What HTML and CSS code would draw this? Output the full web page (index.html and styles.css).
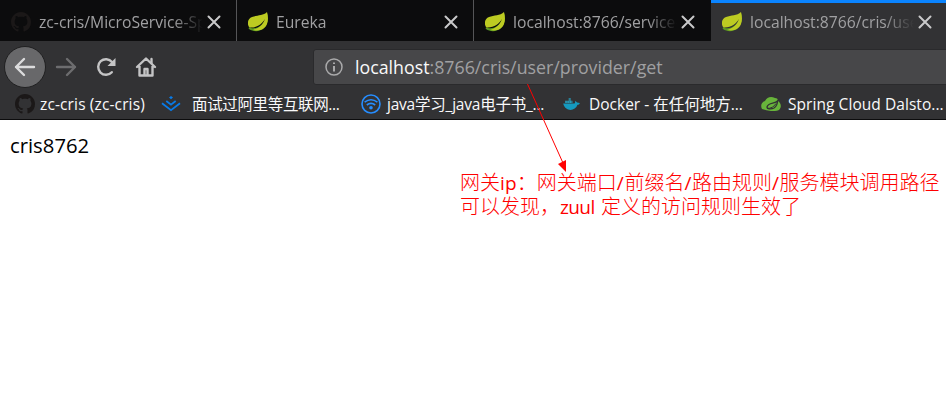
FILE: index.html
```html
<!DOCTYPE html>
<html lang="zh">
<head>
<meta charset="utf-8">
<title>cris8762</title>
<link rel="stylesheet" href="styles.css">
</head>
<body>
<svg class="defs" width="0" height="0">
  <symbol id="cat" viewBox="0 0 16 16"><path fill-rule="evenodd" d="M8 0C3.58 0 0 3.58 0 8c0 3.54 2.29 6.53 5.47 7.59.4.07.55-.17.55-.38 0-.19-.01-.82-.01-1.49-2.01.37-2.53-.49-2.69-.94-.09-.23-.48-.94-.82-1.13-.28-.15-.68-.52-.01-.53.63-.01 1.08.58 1.23.82.72 1.21 1.87.87 2.33.66.07-.52.28-.87.51-1.07-1.78-.2-3.64-.89-3.64-3.95 0-.87.31-1.59.82-2.15-.08-.2-.36-1.02.08-2.12 0 0 .67-.21 2.2.82.64-.18 1.32-.27 2-.27s1.36.09 2 .27c1.53-1.04 2.2-.82 2.2-.82.44 1.1.16 1.92.08 2.12.51.56.82 1.27.82 2.15 0 3.07-1.87 3.75-3.65 3.95.29.25.54.73.54 1.48 0 1.07-.01 1.93-.01 2.2 0 .21.15.46.55.38A8.01 8.01 0 0 0 16 8c0-4.42-3.58-8-8-8z"/></symbol>
  <symbol id="leaf" viewBox="0 0 20 20"><path fill="#5c9a22" d="M19 1C21 8 19 13 16 16C12 20 5 20 1 17C0 16 1 15 3 16C9 17 14 14 17 8Z"/><path fill="#bdcb22" d="M19 0C15 4 9 3 4 5C-1 7-1 13 1.500 15.500C9 16 14 12 17 7C15 13 11 16 5 18C12 19.500 17 17 19 12C20.500 8 20 4 19 0Z"/></symbol>
  <symbol id="x" viewBox="0 0 14 14"><path d="M1.500 1.500l11 11M12.500 1.500l-11 11" fill="none" stroke="#c9c9ca" stroke-width="2" stroke-linecap="round"/></symbol>
</svg>
<header>
  <div class="tabs">
    <div class="tab"><svg class="fav cat"><use href="#cat"/></svg><span class="title">zc-cris/MicroService-Sp</span><svg class="close"><use href="#x"/></svg></div>
    <div class="tab"><svg class="fav"><use href="#leaf"/></svg><span class="title">Eureka</span><svg class="close"><use href="#x"/></svg></div>
    <div class="tab"><svg class="fav"><use href="#leaf"/></svg><span class="title">localhost:8766/service-</span><svg class="close"><use href="#x"/></svg></div>
    <div class="tab active"><svg class="fav"><use href="#leaf"/></svg><span class="title">localhost:8766/cris/use</span><svg class="close"><use href="#x"/></svg></div>
  </div>
  <div class="nav">
    <div class="back"><svg viewBox="0 0 22 20"><path d="M20 10H2M10 2L2 10l8 8"/></svg></div>
    <svg class="forward" viewBox="0 0 22 20"><path d="M2 10h18M12 2l8 8-8 8"/></svg>
    <svg class="reload" viewBox="0 0 20 20"><path d="M15.800 15.200A7.800 7.800 0 1 1 16 5"/><path class="solid" d="M19.500 1v8h-8z"/></svg>
    <svg class="home" viewBox="0 0 22 22"><path d="M2 11L11 2.500 20 11M4.500 10v9.500h13V10M9.500 19v-6h3v6"/><path d="M16.500 3v4"/></svg>
    <div class="url"><svg class="info" viewBox="0 0 18 18"><circle cx="9" cy="9" r="8"/><path class="letter" d="M9 8v5.500M9 4.500v1.500"/></svg><span class="address"><b>localhost</b>:8766/cris/user/provider/get</span></div>
  </div>
  <div class="marks">
    <span class="mark m1"><svg class="cat"><use href="#cat"/></svg><span>zc-cris (zc-cris)</span></span>
    <span class="mark m2"><svg viewBox="0 0 20 16"><path d="M1 7.200l9 7 9-7M5.300 5l4.700 3.700L14.700 5" fill="none" stroke="#087be8" stroke-width="1.800"/><path d="M10 0l2 1.600-2 1.600-2-1.600z" fill="#087be8"/></svg><span>面试过阿里等互联网...</span></span>
    <span class="mark m3"><svg viewBox="0 0 20 20"><g fill="none" stroke="#268dff" stroke-width="1.600"><circle cx="10" cy="10" r="9"/><path d="M3.600 8.200q6.400-5 12.800 0M5.800 11q4.200-3.300 8.400 0"/></g><circle cx="10" cy="13.800" r="1.800" fill="#268dff"/></svg><span>java学习_java电子书_...</span></span>
    <span class="mark m4"><svg viewBox="0 0 18 13"><path d="M0 6h12c1 0 1-2 1-3l2 2 3 .3c-.4 1.700-1.500 2-2.500 2C13 15 2 15 0 6Z" fill="#159abf"/><path d="M2 3h8v2.500H2zM6 0h2v3H6z" fill="#2b9fbd"/><path d="M3 3v2.500M5 3v2.500M7 0v5.500M9 3v2.500" stroke="#23545f" stroke-width=".5"/></svg><span>Docker - 在任何地方...</span></span>
    <span class="mark m5"><svg viewBox="0 0 20 14"><path d="M1 12C-1 8 1 5 4 4C6 0 10-1 14 1c2 0 3 1 3 3 3 2 4 6 1 9-5 2-11 1-17-1Z" fill="#68b43b"/><path d="M16.500 4C14 7 7 5 6 10c0 2 4 2.500 7 1 3-2 3.500-4 3.500-7Z" stroke="#323234" stroke-width="1.300" fill="#68b43b"/><path d="M6 11.500q6 0 9-5" stroke="#323234" fill="none"/></svg><span>Spring Cloud Dalsto...</span></span>
  </div>
</header>
<main>
  <div class="body-text">cris8762</div>
  <div class="note"><div>网关<i class="ip">ip</i>：网关端口<i>/</i>前缀名<i>/</i>路由规则<i>/</i>服务模块调用路径</div><div>可以发现，<i class="zuul">zuul</i> 定义的访问规则生效了</div></div>
</main>
<svg class="arrow" viewBox="0 0 44 90"><path d="M0.500 1L36 80" stroke="#f00" fill="none"/><path d="M39 89L31 81l8-4z" fill="#f00"/></svg>
</body>
</html>
```
FILE: styles.css
```css
* { box-sizing: border-box; }
body { margin: 0; width: 946px; height: 405px; overflow: hidden; background: #fff; font-family: "Open Sans", "Noto Sans CJK SC", sans-serif; }
svg { display: block; flex: none; }
.defs { position: absolute; }
header { height: 120px; background: #323234; border-bottom: 1px solid #0c0c0d; }
.tabs { display: flex; height: 41px; }
.tab { width: 237px; flex: none; display: flex; align-items: center; height: 41px; padding: 2px 15px 0 11px; background: #0c0c0d; border-right: 1px solid #555557; }
.tab:nth-child(3) { border-right-color: #0c0c0d; }
.tab.active { width: 235px; background: #323234; border-top: 3px solid #0a84ff; border-right: 0; padding: 0 14px 1px 11px; }
.fav { width: 20px; height: 20px; }
.cat { fill: #1b1818; }
.title { flex: 1; min-width: 0; margin-left: 8px; overflow: hidden; white-space: nowrap; font-size: 15.700px; line-height: 24px; color: #a0a0a2; -webkit-mask-image: linear-gradient(90deg, #000 calc(100% - 30px), transparent); mask-image: linear-gradient(90deg, #000 calc(100% - 30px), transparent); }
.close { width: 14px; height: 14px; margin-left: 4px; }
.nav { height: 47px; display: flex; align-items: center; padding: 4px 0 0 4px; }
.nav svg { fill: none; stroke: #c4c4c5; stroke-width: 2.400; stroke-linecap: round; stroke-linejoin: round; }
.back { width: 42px; height: 42px; flex: none; border-radius: 50%; background: #68686a; border: 1px solid #202021; display: flex; align-items: center; justify-content: center; }
.nav .back svg { width: 22px; height: 20px; stroke: #dcdcdd; }
.nav .forward { width: 22px; height: 20px; margin-left: 9px; stroke: #6d6d6f; }
.reload { width: 20px; height: 20px; margin-left: 19px; }
.nav .solid { fill: #c4c4c5; stroke: none; }
.home { width: 22px; height: 22px; margin-left: 19px; }
.url { width: 640px; height: 36px; margin-left: 156px; flex: none; background: #474749; border: 1px solid #2a2a2c; border-radius: 3px; display: flex; align-items: center; padding-left: 11px; }
.nav .info { width: 18px; height: 18px; stroke: #aaaaab; stroke-width: 1.500; }
.nav .letter { stroke-width: 2; stroke-linecap: butt; }
.address { margin-left: 12px; font-size: 17.800px; line-height: 28px; color: #a0a0a2; white-space: nowrap; }
.address b { font-weight: 400; color: #f9f9fa; }
.marks { height: 31px; display: flex; align-items: center; color: #f9f9fa; font-size: 15.500px; }
.mark { flex: none; display: flex; align-items: center; white-space: nowrap; line-height: 24px; }
.mark svg { width: 20px; height: 20px; }
.m1 { width: 146px; padding-left: 15px; gap: 5px; letter-spacing: .13px; }
.m2 { width: 215px; padding-left: 15px; gap: 11px; letter-spacing: -.35px; }
.m3 { width: 202px; gap: 6px; letter-spacing: -.22px; }
.m4 { width: 198px; gap: 9px; }
.m5 { gap: 7px; letter-spacing: .06px; }
.mark.m4 svg { width: 17px; height: 12px; }
.mark.m5 svg { height: 14px; }
.mark.m2 svg { height: 16px; }
main { display: flex; }
.body-text { width: 460px; flex: none; padding: 10px 0 0 10px; font: 20.300px/30px "Open Sans", sans-serif; color: #000; }
.note { padding-top: 50px; color: #f00; font-family: "Noto Sans CJK SC", sans-serif; font-size: 20px; font-weight: 300; line-height: 24px; white-space: nowrap; }
.note i { font-style: normal; font-family: "Open Sans", sans-serif; font-size: 19px; line-height: 20px; font-weight: 500; letter-spacing: .6px; }
.note .ip { letter-spacing: .2px; }
.note .zuul { letter-spacing: -.6px; margin-right: 2px; }
.arrow { position: absolute; left: 527px; top: 83px; width: 44px; height: 90px; }
```
